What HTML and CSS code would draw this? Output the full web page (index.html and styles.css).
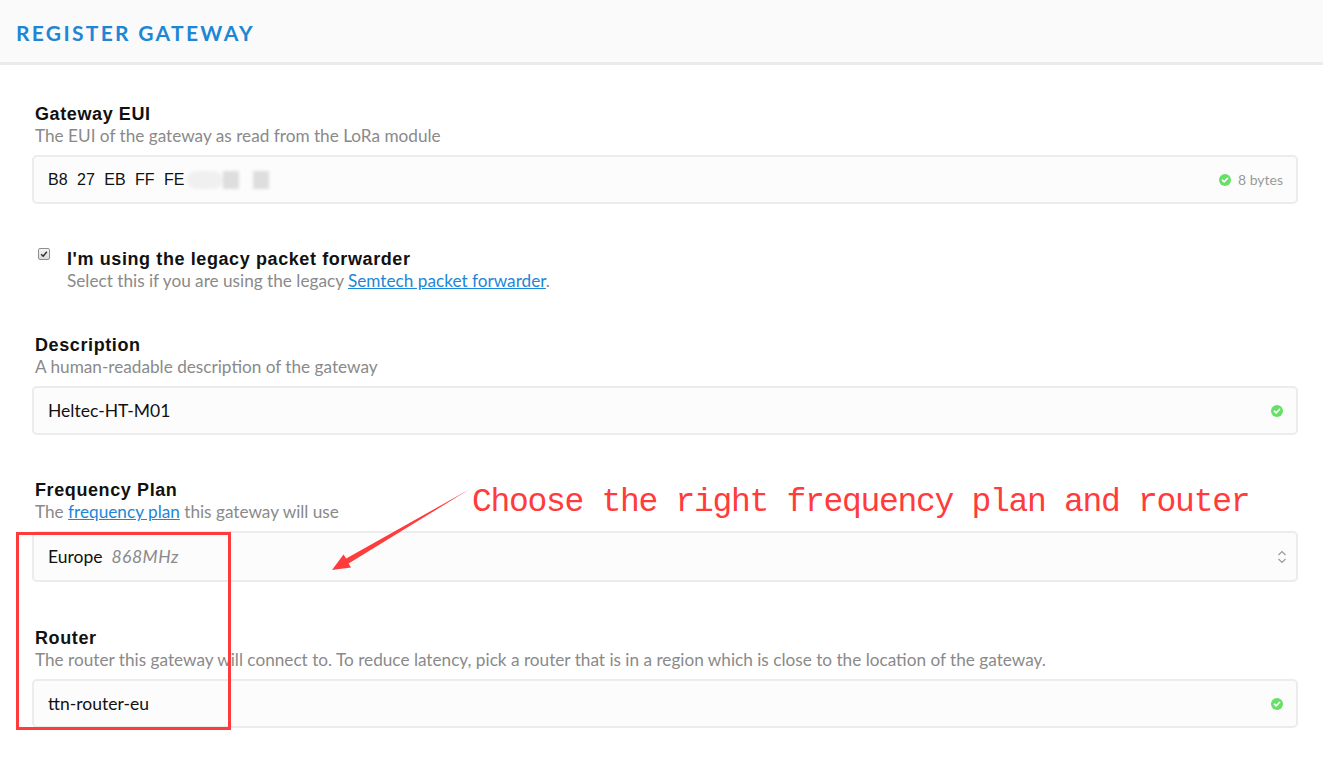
FILE: index.html
```html
<!DOCTYPE html>
<html>
<head>
<meta charset="utf-8">
<link rel="stylesheet" href="styles.css">
</head>
<body>
<header class="page-header">
  <h1 class="title">REGISTER GATEWAY</h1>
</header>
<main class="form">
  <div class="field">
    <div class="label">Gateway EUI</div>
    <div class="help">The EUI of the gateway as read from the LoRa module</div>
    <div class="input">
      <span class="eui">B8 27 EB FF FE</span>
      <span class="masked"><span class="m1"></span><span class="m2"></span><span class="m3"></span></span>
      <span class="status">
        <svg class="ok" viewBox="0 0 12 12"><circle cx="6" cy="6" r="6" fill="#66e066"/><path d="M3.4 6.2 L5.2 7.9 L8.6 4.3" fill="none" stroke="#fff" stroke-width="1.6" stroke-linecap="round" stroke-linejoin="round"/></svg>
        <span class="bytes">8 bytes</span>
      </span>
    </div>
  </div>

  <div class="field check-field">
    <span class="checkbox">
      <svg viewBox="0 0 12 12"><path d="M2.6 6.2 L5 8.6 L9.4 3.2" fill="none" stroke="#333" stroke-width="1.8" stroke-linejoin="round"/></svg>
    </span>
    <div class="check-text">
      <div class="label">I'm using the legacy packet forwarder</div>
      <div class="help">Select this if you are using the legacy <a class="link" href="#">Semtech packet forwarder</a>.</div>
    </div>
  </div>

  <div class="field">
    <div class="label">Description</div>
    <div class="help">A human-readable description of the gateway</div>
    <div class="input">
      <span class="value">Heltec-HT-M01</span>
      <span class="status">
        <svg class="ok" viewBox="0 0 12 12"><circle cx="6" cy="6" r="6" fill="#66e066"/><path d="M3.4 6.2 L5.2 7.9 L8.6 4.3" fill="none" stroke="#fff" stroke-width="1.6" stroke-linecap="round" stroke-linejoin="round"/></svg>
      </span>
    </div>
  </div>

  <div class="field">
    <div class="label">Frequency Plan</div>
    <div class="help">The <a class="link" href="#">frequency plan</a> this gateway will use</div>
    <div class="input select">
      <span class="value">Europe</span><span class="sub">868MHz</span>
      <span class="status">
        <svg class="chev" viewBox="0 0 10 16"><path d="M1.5 6 L5 2.5 L8.5 6" fill="none" stroke="#9a9a9a" stroke-width="1.2"/><path d="M1.5 10 L5 13.5 L8.5 10" fill="none" stroke="#9a9a9a" stroke-width="1.2"/></svg>
      </span>
    </div>
  </div>

  <div class="field router-field">
    <div class="label">Router</div>
    <div class="help">The router this gateway will connect to. To reduce latency, pick a router that is in a region which is close to the location of the gateway.</div>
    <div class="input">
      <span class="value">ttn-router-eu</span>
      <span class="status">
        <svg class="ok" viewBox="0 0 12 12"><circle cx="6" cy="6" r="6" fill="#66e066"/><path d="M3.4 6.2 L5.2 7.9 L8.6 4.3" fill="none" stroke="#fff" stroke-width="1.6" stroke-linecap="round" stroke-linejoin="round"/></svg>
      </span>
    </div>
  </div>
</main>

<div class="mark-box"></div>
<svg class="mark-arrow" width="1323" height="762" viewBox="0 0 1323 762">
  <polygon points="470,489 348.6,563.4 351,567.5 332,570 343.5,554.5 346.2,558.6" fill="#ff3b3b"/>
</svg>
<div class="mark-text">Choose the right frequency plan and router</div>
</body>
</html>
```

FILE: styles.css
```css
html, body {
  margin: 0;
  padding: 0;
  background: #ffffff;
}
body {
  width: 1323px;
  height: 762px;
  overflow: hidden;
  position: relative;
  font-family: "Lato", "Liberation Sans", sans-serif;
}
.page-header {
  height: 62px;
  background: #fafafa;
  border-bottom: 3px solid #ebebeb;
  padding-left: 16px;
}
.title {
  margin: 0;
  padding-top: 20px;
  font-family: "Lato", sans-serif;
  font-weight: 700;
  font-size: 21px;
  line-height: 26px;
  letter-spacing: 2.3px;
  color: #1d86d6;
}
.form {
  padding: 38px 25px 0 32px;
  display: flex;
  flex-direction: column;
  gap: 44px;
}
.field {
  display: flex;
  flex-direction: column;
}
.label {
  font-family: "Liberation Sans", Arial, sans-serif;
  font-weight: 700;
  font-size: 18px;
  line-height: 22px;
  letter-spacing: 0.6px;
  color: #111;
  margin-left: 3px;
}
.help {
  font-family: "Lato", sans-serif;
  font-size: 17.2px;
  line-height: 22px;
  color: #8a8a8a;
  margin-left: 3px;
}
.link {
  color: #1d86d6;
  text-decoration: underline;
}
.input {
  margin-top: 8px;
  height: 49px;
  box-sizing: border-box;
  border: 2px solid #ececec;
  border-radius: 5px;
  background: #fcfcfc;
  padding: 0 13px 0 14px;
  display: flex;
  align-items: center;
  font-size: 17.5px;
  color: #111;
}
.select {
  height: 51px;
}
.eui {
  font-family: "Liberation Sans", Arial, sans-serif;
  font-size: 16px;
  word-spacing: 5px;
}
.masked {
  display: flex;
  align-items: center;
  margin-left: 3px;
  height: 20px;
  filter: blur(1.5px);
}
.masked span {
  display: block;
  height: 18px;
}
.m1 { width: 36px; background: #f0f0f0; border-radius: 9px; }
.m2 { width: 16px; background: #dedede; }
.m3 { width: 16px; background: #dedede; margin-left: 14px; }
.value {
  font-family: "Lato", sans-serif;
}
.sub {
  font-style: italic;
  color: #8a8a8a;
  margin-left: 9px;
  letter-spacing: 0.5px;
}
.status {
  margin-left: auto;
  display: flex;
  align-items: center;
  gap: 7px;
}
.ok {
  width: 12px;
  height: 12px;
  display: block;
}
.bytes {
  font-size: 14px;
  color: #9a9a9a;
}
.chev {
  width: 10px;
  height: 16px;
  display: block;
  margin-right: -4px;
}
.check-field {
  flex-direction: row;
  align-items: flex-start;
  padding-left: 6px;
  gap: 17px;
  margin-bottom: -2px;
}
.router-field {
  margin-top: 1px;
}
.checkbox {
  width: 12px;
  height: 12px;
  box-sizing: border-box;
  border: 1px solid #8f8f8f;
  border-radius: 2px;
  background: linear-gradient(#f4f4f4, #dcdcdc);
  display: block;
}
.checkbox svg {
  width: 10px;
  height: 10px;
  display: block;
}
.check-text .label,
.check-text .help {
  margin-left: 0;
}
.mark-box {
  position: absolute;
  left: 16px;
  top: 532px;
  width: 215px;
  height: 198px;
  box-sizing: border-box;
  border: 3px solid #ff3b3b;
}
.mark-arrow {
  position: absolute;
  left: 0;
  top: 0;
  pointer-events: none;
}
.mark-text {
  position: absolute;
  left: 472px;
  top: 484px;
  font-family: "Liberation Mono", "Courier New", monospace;
  font-size: 33px;
  line-height: 38px;
  letter-spacing: -1.3px;
  color: #ff3b3b;
  white-space: nowrap;
}
```
